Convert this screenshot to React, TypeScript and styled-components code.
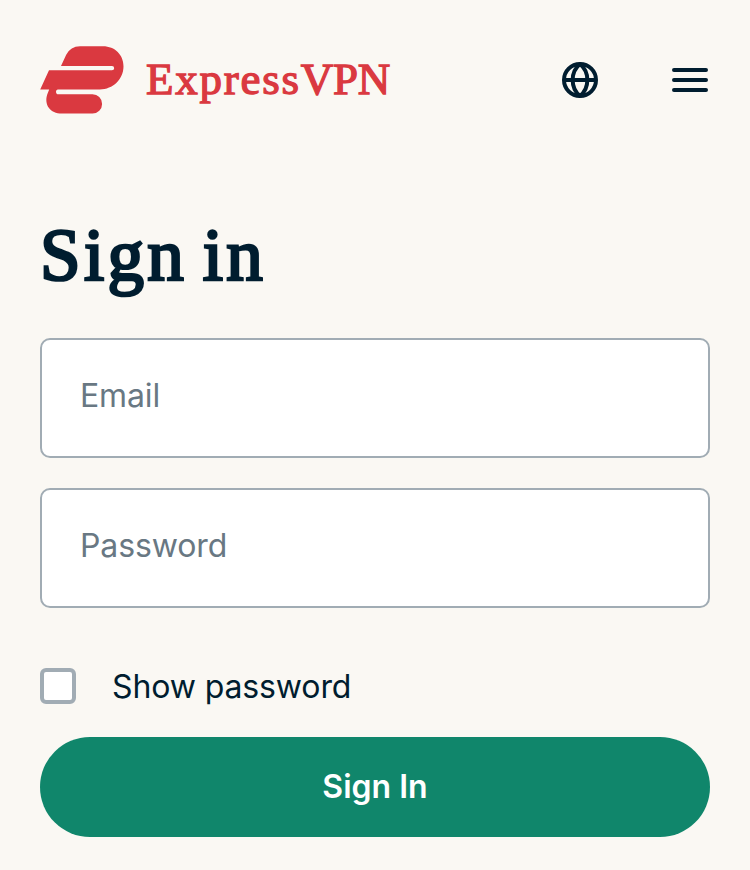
import React, { useState } from "react";
import styled, { createGlobalStyle } from "styled-components";

const GlobalStyle = createGlobalStyle`
  * { box-sizing: border-box; }
  body { margin: 0; background: #faf8f3; }
`;

const Page = styled.main`
  width: 100%;
  min-height: 870px;
  padding: 0 40px;
  background: #faf8f3;
  color: #001d2f;
  font-family: Inter, "Liberation Sans", sans-serif;
`;

const Header = styled.header`
  display: flex;
  align-items: center;
  justify-content: space-between;
  height: 160px;
`;

const Brand = styled.a`
  display: flex;
  align-items: center;
  color: #da3940;
  text-decoration: none;
  svg { display: block; margin-right: 22px; }
`;

const Wordmark = styled.span`
  padding-bottom: 2px;
  font: 400 45px/60px "Liberation Serif", serif;
  letter-spacing: 1.75px;
  -webkit-text-stroke: 1.3px currentColor;
`;

const Initials = styled.span`
  letter-spacing: -0.3px;
`;

const Actions = styled.nav`
  display: flex;
  gap: 70px;
`;

const IconButton = styled.button`
  width: 40px;
  height: 40px;
  padding: 0;
  border: 0;
  background: none;
  color: #001d2f;
  svg { display: block; }
`;

const Title = styled.h1`
  margin: 0;
  padding-top: 56px;
  height: 178px;
  font: 400 73px/80px "Liberation Serif", serif;
  letter-spacing: 3.3px;
  word-spacing: -6px;
  -webkit-text-stroke: 2.7px currentColor;
`;

const Form = styled.form`
  display: flex;
  flex-direction: column;
`;

const Field = styled.input`
  height: 120px;
  margin: 0 0 30px;
  padding: 0 38px 5px;
  border: 2px solid #a1acb4;
  border-radius: 10px;
  background: #fff;
  outline: none;
  color: #001d2f;
  font: 400 32px/48px Inter, sans-serif;
  letter-spacing: -0.12px;
  &::placeholder { color: #697883; opacity: 1; }
`;

const CheckRow = styled.label`
  display: flex;
  align-items: center;
  gap: 36px;
  height: 36px;
  margin: 30px 0 32.6px;
  font-size: 32px;
  line-height: 36px;
  letter-spacing: -0.12px;
`;

const CheckLabel = styled.span`
  padding-top: 2px;
`;

const Checkbox = styled.input`
  appearance: none;
  width: 36px;
  height: 36px;
  margin: 0;
  border: 4px solid #a1acb4;
  border-radius: 6px;
  background: #fff;
  &:checked { background: #10866b; }
`;

const Submit = styled.button`
  height: 100px;
  padding: 0;
  border: 0;
  border-radius: 50px;
  background: #10866b;
  color: #fff;
  font: 600 32px/48px Inter, sans-serif;
`;

const LogoMark = () => (
  <svg width="84" height="68" viewBox="40 46 84 68" fill="currentColor" aria-hidden="true">
    <path d="M61 66 66.2 54.8Q70.5 46.3 80 46.3H103C115 46.3 123.5 55 123.5 66.2C123.5 79 113 89.4 99.8 89.4H58C55.3 89.4 55.3 94.3 58.5 94.3H92.5A9.6 9.6 0 0 1 92.5 113.5H62C50 113.5 43.8 104.5 47.3 94.2L49.2 89.4H40.2L49 70.3H112A2.15 2.15 0 0 0 112 66Z" />
  </svg>
);

const GlobeIcon = () => (
  <svg width="40" height="40" viewBox="0 0 40 40" fill="none" stroke="currentColor" strokeWidth="4" aria-hidden="true">
    <circle cx="20" cy="20" r="16" />
    <path d="M4 20H36M20 4C10.2 12 10.2 28 20 36M20 4C29.8 12 29.8 28 20 36" />
  </svg>
);

const MenuIcon = () => (
  <svg width="40" height="40" viewBox="0 0 40 40" fill="none" stroke="currentColor" strokeWidth="4" strokeLinecap="round" aria-hidden="true">
    <path d="M4 10H36M4 20H36M4 30H36" />
  </svg>
);

export default function App() {
  const [visible, setVisible] = useState(false);
  return (
    <Page>
      <GlobalStyle />
      <Header>
        <Brand href="#">
          <LogoMark />
          <Wordmark>Express<Initials>VPN</Initials></Wordmark>
        </Brand>
        <Actions>
          <IconButton aria-label="Language"><GlobeIcon /></IconButton>
          <IconButton aria-label="Menu"><MenuIcon /></IconButton>
        </Actions>
      </Header>
      <Title>Sign in</Title>
      <Form onSubmit={(e) => e.preventDefault()}>
        <Field type="email" placeholder="Email" />
        <Field type={visible ? "text" : "password"} placeholder="Password" />
        <CheckRow>
          <Checkbox type="checkbox" checked={visible} onChange={(e) => setVisible(e.target.checked)} />
          <CheckLabel>Show password</CheckLabel>
        </CheckRow>
        <Submit type="submit">Sign In</Submit>
      </Form>
    </Page>
  );
}
